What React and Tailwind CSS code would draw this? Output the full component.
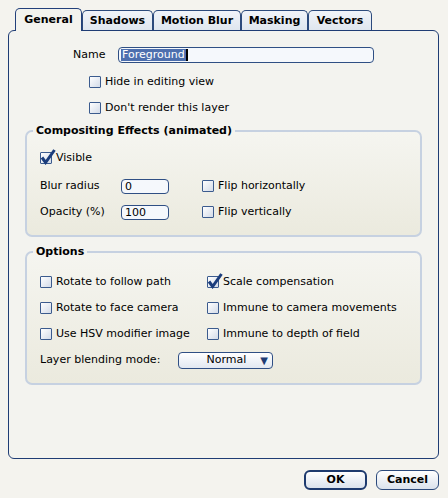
import React from "react";

const TABS = [
  { label: "General", w: "w-[67px]", active: true },
  { label: "Shadows", w: "w-[71px]" },
  { label: "Motion Blur", w: "w-[88px]" },
  { label: "Masking", w: "w-[67px]" },
  { label: "Vectors", w: "w-[64px]" },
];

function Checkbox({ checked }) {
  return (
    <span className="relative inline-block w-[12px] h-[12px] shrink-0 rounded-[1px] border border-[#3b5b8e] bg-linear-to-br from-white to-[#d3dbe8]">
      {checked && (
        <svg
          className="absolute left-[-1px] top-[-4px] w-[16px] h-[16px]"
          viewBox="0 0 16 16"
        >
          <path
            d="M2 8.5 L5.6 13.5 L14.5 1"
            fill="none"
            stroke="#1b3d7c"
            strokeWidth="3"
            strokeLinejoin="miter"
          />
        </svg>
      )}
    </span>
  );
}

function Check({ label, checked }) {
  return (
    <label className="flex items-center gap-[4px] h-[16px] leading-[16px]">
      <Checkbox checked={checked} />
      <span>{label}</span>
    </label>
  );
}

function Field({ value, className }) {
  return (
    <div
      className={`h-[15px] rounded-[4px] border border-[#2f4f84] bg-[#f5f8fc] px-[3px] leading-[13px] ${className}`}
    >
      {value}
    </div>
  );
}

export default function App() {
  return (
    <div className="w-[448px] h-[498px] bg-[#f4f3ee] text-[11px] text-black font-['DejaVu_Sans',sans-serif] pt-[8px]">
      {/* Tabs */}
      <div className="flex items-end h-[22px] pl-[15px]">
        {TABS.map((t) =>
          t.active ? (
            <div
              key={t.label}
              className={`${t.w} h-[23px] mb-[-1px] relative z-10 rounded-t-[5px] border border-b-0 border-[#23407a] bg-[#f3f3ee] font-bold flex items-center justify-center`}
            >
              {t.label}
            </div>
          ) : (
            <div
              key={t.label}
              className={`${t.w} h-[20px] rounded-t-[5px] border border-b-0 border-[#2c4a7c] bg-linear-to-b from-[#f1f4f9] to-[#dfe6ef] font-bold flex items-center justify-center pt-[1px]`}
            >
              {t.label}
            </div>
          )
        )}
      </div>

      {/* Panel */}
      <div className="ml-[8px] w-[431px] h-[429px] rounded-[6px] border border-[#1f3c74] bg-[#f3f3ef]">
        <div className="flex items-center h-[16px] mt-[16px] pl-[64px]">
          <span className="w-[40px]">Name</span>
          <div className="ml-[5px] w-[256px] h-[16px] rounded-[4px] border border-[#2f4f84] bg-[#f5f8fc] px-[2px] flex items-center">
            <span className="bg-[#4d6fae] text-white leading-[12px] px-[1px]">
              Foreground
            </span>
            <span className="w-[2px] h-[12px] bg-black" />
          </div>
        </div>

        <div className="pl-[80px] mt-[11px]">
          <Check label="Hide in editing view" />
        </div>
        <div className="pl-[80px] mt-[10px]">
          <Check label="Don't render this layer" />
        </div>

        {/* Compositing Effects */}
        <fieldset className="ml-[16px] mt-[8px] w-[397px] rounded-[7px] border-2 border-[#c6d1e1] bg-linear-to-b from-[#f5f5f0] to-[#ebeade] pb-[15px]">
          <legend className="ml-[6px] px-[3px] font-bold leading-[13px]">
            Compositing Effects (animated)
          </legend>
          <div className="pl-[13px]">
            <div className="mt-[13px]">
              <Check label="Visible" checked />
            </div>
            <div className="mt-[12px] flex items-center h-[16px]">
              <span className="w-[81px]">Blur radius</span>
              <Field value="0" className="w-[48px]" />
              <div className="ml-[33px]">
                <Check label="Flip horizontally" />
              </div>
            </div>
            <div className="mt-[10px] flex items-center h-[16px]">
              <span className="w-[81px]">Opacity (%)</span>
              <Field value="100" className="w-[48px]" />
              <div className="ml-[33px]">
                <Check label="Flip vertically" />
              </div>
            </div>
          </div>
        </fieldset>

        {/* Options */}
        <fieldset className="ml-[16px] mt-[8px] w-[397px] rounded-[7px] border-2 border-[#c6d1e1] bg-linear-to-b from-[#f5f5f0] to-[#ebeade] pb-[14px]">
          <legend className="ml-[6px] px-[3px] font-bold leading-[13px]">
            Options
          </legend>
          <div className="pl-[13px]">
            <div className="mt-[16px] grid grid-cols-[167px_1fr] gap-y-[10px]">
              <Check label="Rotate to follow path" />
              <Check label="Scale compensation" checked />
              <Check label="Rotate to face camera" />
              <Check label="Immune to camera movements" />
              <Check label="Use HSV modifier image" />
              <Check label="Immune to depth of field" />
            </div>
            <div className="mt-[10px] flex items-center h-[17px]">
              <span className="w-[138px]">Layer blending mode:</span>
              <div className="w-[95px] h-[17px] rounded-[4px] border border-[#2f4f84] bg-linear-to-b from-white to-[#e2e8f1] flex items-center justify-end pr-[4px]">
                <span>Normal</span>
                <span className="ml-[14px] text-[10px] text-[#1f3c74]">▼</span>
              </div>
            </div>
          </div>
        </fieldset>
      </div>

      {/* Buttons */}
      <div className="flex justify-end gap-[9px] pr-[9px] mt-[11px]">
        <button className="w-[63px] h-[20px] rounded-[6px] border-2 border-[#1e3a6e] bg-linear-to-b from-white to-[#dbe2ec] font-bold leading-[14px]">
          OK
        </button>
        <button className="w-[63px] h-[20px] rounded-[6px] border border-[#2c4a7c] bg-linear-to-b from-white to-[#dbe2ec] font-bold leading-[16px]">
          Cancel
        </button>
      </div>
    </div>
  );
}
